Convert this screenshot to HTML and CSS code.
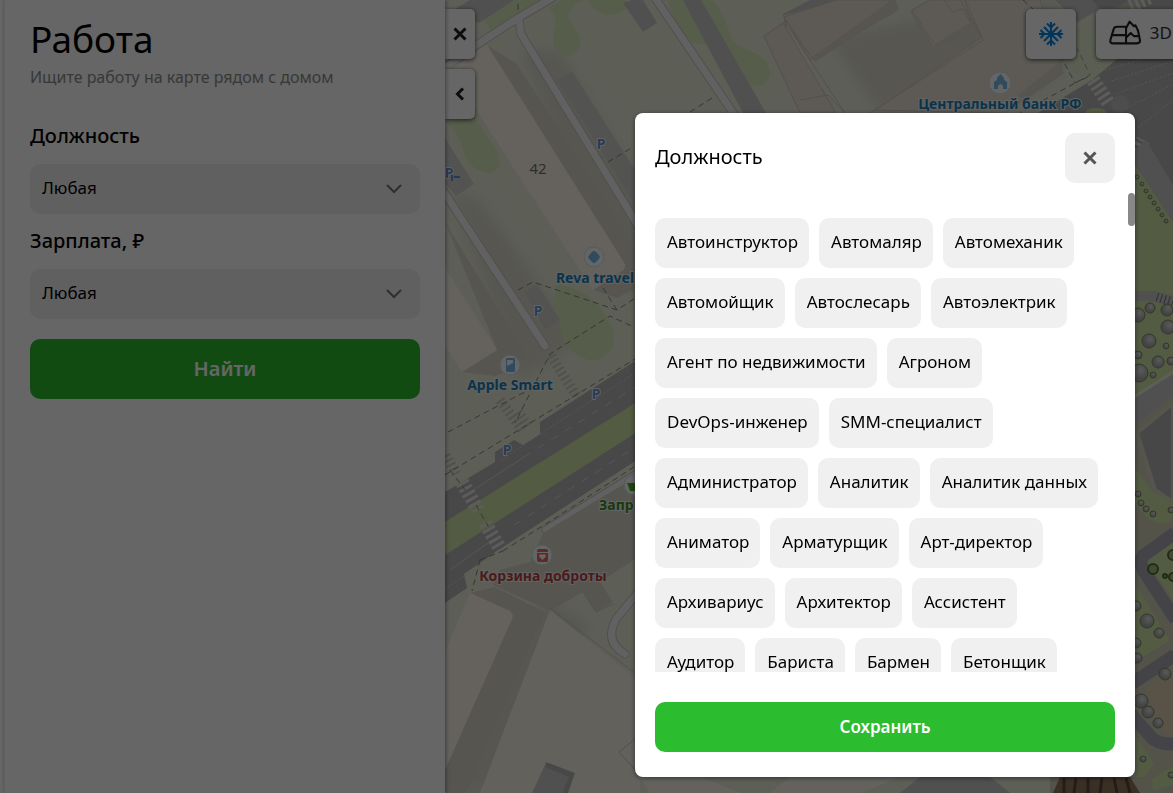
FILE: index.html
```html
<!DOCTYPE html>
<html lang="ru">
<head>
<meta charset="utf-8">
<meta name="viewport" content="width=device-width, initial-scale=1">
<title>Работа</title>
<link rel="stylesheet" href="styles.css">
</head>
<body>
<div class="app">
  <aside class="sidebar">
    <h1 class="title">Работа</h1>
    <p class="subtitle">Ищите работу на карте рядом с домом</p>
    <form class="filters">
      <label class="field-label" for="position">Должность</label>
      <div class="select-box">
        <select id="position" class="select"><option>Любая</option></select>
        <svg class="chevron" viewBox="0 0 16 10" aria-hidden="true"><path d="M1 1l7 7 7-7"/></svg>
      </div>
      <label class="field-label" for="salary">Зарплата, ₽</label>
      <div class="select-box">
        <select id="salary" class="select"><option>Любая</option></select>
        <svg class="chevron" viewBox="0 0 16 10" aria-hidden="true"><path d="M1 1l7 7 7-7"/></svg>
      </div>
      <button class="button find" type="button">Найти</button>
    </form>
  </aside>

  <main class="map">
    <svg class="map-canvas" viewBox="445 0 728 793" preserveAspectRatio="xMinYMin slice" aria-label="Карта">
      <defs>
        <filter id="soft" x="-20%" y="-20%" width="140%" height="140%"><feGaussianBlur stdDeviation="7"/></filter>
        <radialGradient id="tree" cx=".6" cy=".35"><stop offset="0" stop-color="#e0e0e0"/><stop offset="1" stop-color="#aaa"/></radialGradient>
      </defs>
      <rect class="ground" x="445" width="728" height="793"/>

      <g class="shade" filter="url(#soft)">
        <path d="M520 50L560 50L660 220L640 300L600 250Z"/>
        <path d="M450 190L480 200L580 340L520 380Z"/>
        <path d="M545 600L590 625L500 793H450Z"/>
        <path d="M830 40L1000 0H1060L1065 70L1010 100L880 113Z"/>
      </g>

      <g class="park">
        <path d="M482 19L512 0H543L520 14L491 30Q487 24 482 19Z"/>
        <path d="M548 8Q556 2 564 0H583Q562 10 572 24Q583 38 579 47Q574 58 566 56Q550 52 554 32Q560 18 548 8Z"/>
        <path d="M588 0Q594 12 607 15Q620 15 627 8L626 0Z"/>
        <path d="M668 0H684L712 45Q690 45 677 33Z"/>
        <path d="M698 0H712Q722 8 732 40Q740 48 758 54Q771 62 770 76Q764 88 750 85Z"/>
        <path d="M446 122L475 117Q482 130 497 150Q504 172 489 173Q468 170 463 150Q459 132 446 122Z"/>
        <path d="M556 285Q585 287 602 310Q616 330 613 345Q605 362 588 360Q560 350 559 320Q552 304 556 285Z"/>
        <ellipse cx="521" cy="793" rx="14" ry="9"/>
      </g>

      <path class="asphalt-light" d="M455 9L479 23L514 0H470ZM623 3L632 0H643L657 23L643 32ZM683 0H701L766 113H743ZM783 14L810 0H840L785 24Z"/>
      <path class="building-edge" d="M783 15L841 0H895L898 10L810 60ZM764 36L785 22L805 113H808Z"/>
      <path class="building-edge" d="M911 11L930 0H965L982 37L875 110L1005 113L1062 70L1040 0H965L971 24L934 49Z"/>
      <path class="building-edge" d="M784 17L836 0H893L812 58ZM764 36L783 23L836 113H800Z"/>
      <path class="side" d="M812 58L893 0L898 8L815 62ZM1018 95L1060 62L1064 73L1050 83L1025 100Z"/>
      <path class="building-edge" d="M912 10L930 0H944L952 12L963 9L971 23L935 45Z"/>
      <path class="side" d="M935 45L971 22L971 29L935 50Z"/>
      <path class="outline" d="M785 22L845 113M983 40L870 113M960 0L983 40M800 100L828 95L845 113"/>

      <path class="walk-edge" d="M442 70L478 44L518 18L552 -2M519 19L521 34L640 229M655 -2L740 123M442 189L545 346"/>
      <path class="walk" d="M442 70L478 44L518 18L552 -2M519 19L521 34L640 229M655 -2L740 123M442 189L545 346"/>
      <path class="parking" d="M557 80L572 71L635 170V205ZM445 138L474 184L456 196L445 184ZM524 292L537 284L560 320L545 330Z"/>

      <path class="side" d="M487 45L517 64L640 255V286L617 298L593 290L626 268Z"/>
      <path class="building" d="M445 72L487 45L625 264Q626 269 621 272L593 290L475 108L445 80Z"/>
      <path class="side" d="M445 222L527 355L514 368L495 376L462 372L497 350Z"/>
      <path class="building" d="M445 268L497 350L462 372L445 345Z"/>

      <path class="asphalt" d="M445 492L495 462V452L514 440L523 445L540 434V422L640 358V404L445 524Z"/>
      <path class="lawn" d="M445 522L640 400V430L445 555Z"/>
      <path class="asphalt" d="M445 555L640 430V458L500 549L464 574L467 588L445 603Z"/>
      <path class="lane" d="M475 489L524 457M450 570L488 543"/>
      <path class="lane dotted" d="M445 589L464 576M500 461L540 434L640 370"/>
      <path class="lane dashed" d="M524 457L640 384M514 525L640 444"/>
      <path class="walk-edge" d="M546 530L640 472"/>
      <path class="walk" d="M546 530L640 472"/>
      <path class="zebra" d="M462 482L478 510M485 523L501 550"/>
      <path class="zebra faint" d="M551 356L577 397M500 400L523 431M518 412L530 428M446 455L456 474"/>
      <path class="footway" d="M518 290L533 282L617 310L640 295M603 288L617 310M640 330L610 316L550 354L515 423M448 432L515 397L545 382M445 475L640 356M450 470L465 490M476 505L488 526M503 551L560 515L640 463M480 560L503 551M480 560L472 591M608 162L633 147M690 112L712 98M518 4V10M1023 0L1078 50L1090 75L1020 113M1060 55L1075 83L1090 76"/>

      <path class="side" d="M640 475L597 500L543 533L530 562L500 570L493 585L550 611L583 592L596 612L613 602L600 582L640 556Z"/>
      <path class="pale" d="M550 610L640 682V793H480Z"/>
      <path class="side" d="M470 593L495 587L545 612L466 793H445V770L513 615Z"/>
      <path class="building" d="M470 593L510 611Q514 615 512 619L445 770V652Z"/>
      <path class="outline" d="M550 608L640 677M640 735L619 752L640 775M583 592L596 612L613 604"/>
      <path class="walk-edge" d="M640 590L616 619Q604 642 625 654"/>
      <path class="walk" d="M640 590L616 619Q604 642 625 654"/>
      <path class="asphalt-light" d="M545 765L571 774L562 793H532Z"/>
      <path class="asphalt" d="M546 762L575 773L568 793H562L569 777L545 767Z"/>
      <path class="building" d="M640 777H700L740 793H650ZM790 777H900L860 793H770Z"/>
      <path class="asphalt-light" d="M920 777H990L1010 793H900Z"/>

      <path class="asphalt" d="M1010 130L1092 80L1118 58L1128 35L1090 0H1173V250L1135 170V140Z"/>
      <path class="park" d="M1076 28L1130 0H1145L1115 60L1092 80L1068 70Z" opacity=".35"/>
      <path class="asphalt-light" d="M1055 0L1078 22L1100 9L1092 0Z"/>
      <path class="lane dotted" d="M1105 70L1173 50M1112 81L1173 61M1115 94L1173 73M1120 112L1173 84M1135 130L1173 100"/>
      <path class="zebra" d="M1093 80L1109 104M1130 6L1152 -4M1137 152L1143 140"/>
      <circle class="pole" cx="1120" cy="104" r="9"/>
      <ellipse class="lawn" cx="1096" cy="113" rx="11" ry="5"/>
      <path class="asphalt-light" d="M1135 150L1146 140L1173 185V230L1136 175Z"/>

      <path class="lawn" d="M1135 165L1173 222V370L1135 395Z"/>
      <path class="asphalt-light" d="M1135 291H1155L1173 296V306L1150 301H1135ZM1135 398L1173 374V430L1135 450Z"/>
      <path class="ticks" d="M1157 297L1173 302"/>
      <path class="pavement" d="M1135 425L1173 395V793H1050V777H1135Z"/>
      <path class="roof-gray" d="M1137 433L1173 403V502L1155 490Z"/>
      <path class="lawn" d="M1135 468L1153 492L1173 502V520Q1158 529 1145 515L1135 505ZM1135 581L1171 640L1135 662ZM1135 690L1173 665V649L1135 675ZM1135 735L1154 764L1144 777H1135ZM1145 557Q1163 540 1173 540V600L1152 568ZM1152 779L1173 766V785L1153 790Z"/>
      <path class="sand" d="M1145 687L1173 668V742L1160 730Z"/>
      <path class="road-bend" d="M1175 533L1143 556Q1138 563 1145 573L1176 620M1130 685L1175 655M1130 713L1151 737Q1158 745 1175 744"/>
      <path class="outline" d="M1135 583L1171 641L1138 661"/>
      <g class="trees">
        <circle cx="1138" cy="315" r="7"/><circle cx="1150" cy="308" r="5"/><circle cx="1167" cy="310" r="6"/><circle cx="1168" cy="327" r="7"/><circle cx="1149" cy="341" r="7"/><circle cx="1166" cy="346" r="3"/><circle cx="1138" cy="355" r="4"/><circle cx="1158" cy="362" r="6"/><circle cx="1171" cy="361" r="4"/><circle cx="1139" cy="373" r="9"/><circle cx="1153" cy="375" r="3"/>
        <circle cx="1137" cy="177" r="2"/><circle cx="1142" cy="184" r="2"/><circle cx="1146" cy="191" r="2"/><circle cx="1150" cy="197" r="2"/><circle cx="1154" cy="203" r="2"/><circle cx="1158" cy="209" r="2"/><circle cx="1162" cy="215" r="2"/><circle cx="1166" cy="221" r="2"/>
        <circle cx="1138" cy="494" r="3"/><circle cx="1141" cy="503" r="3"/><circle cx="1146" cy="509" r="3"/><circle cx="1153" cy="514" r="3"/><circle cx="1171" cy="510" r="3"/>
        <circle cx="1136" cy="606" r="5"/><circle cx="1147" cy="621" r="7"/><circle cx="1159" cy="633" r="5"/><circle cx="1136" cy="643" r="5"/><circle cx="1137" cy="658" r="5"/><circle cx="1165" cy="674" r="6"/><circle cx="1141" cy="701" r="7"/><circle cx="1148" cy="712" r="6"/><circle cx="1158" cy="723" r="5"/><circle cx="1143" cy="759" r="3"/><circle cx="1171" cy="775" r="3"/>
      </g>
      <g class="shrubs"><circle cx="1153" cy="569" r="5"/><circle cx="1165" cy="576" r="2"/><circle cx="1173" cy="555" r="5"/><circle cx="1173" cy="577" r="4"/></g>
      <path class="brick" d="M1053 793L1060 777H1130L1140 793Z"/>
      <path class="brick-lines" d="M1064 778V793M1076 778L1074 793M1088 778V793M1102 778L1100 793M1114 778L1117 793M1126 778L1130 793"/>

      <g class="poi-dot"><circle cx="1000" cy="83" r="11"/><circle cx="594" cy="257" r="10"/><circle cx="510" cy="365" r="10"/><circle cx="542" cy="555" r="10"/><circle cx="634" cy="485" r="10"/></g>
      <path class="poi-blue" d="M994 89V82L997 80V78L1000.500 74L1004 78V80L1007 82V89H1003V86Q1000.500 82 998 86V89ZM594 251Q596 251 600 257Q596 263 594 263Q592 263 588 257Q592 251 594 251Z"/>
      <rect class="poi-blue" x="506" y="358" width="9" height="14" rx="1"/><path class="poi-light" d="M507 360H513V363L507 366Z"/>
      <rect class="poi-red" x="537" y="549" width="11" height="13" rx="2"/><path class="poi-light" d="M537 552H548V553H537ZM542.500 560L539 556.500Q539 554 541 554L542.500 555L544 554Q546 554 546 556.500Z"/>
      <path class="poi-green" d="M627 483H640V485L638 491H630L628 485Z"/>

      <g class="parking-mark"><text x="601" y="149">P</text><text x="538" y="316">P</text><text x="596" y="399">P</text><text x="507" y="455">P</text><text x="449" y="178">P</text></g>
      <path class="parking-bar" d="M452 175V181M454 177H460"/>
      <text class="house" x="538" y="174">42</text>
      <text class="place" x="1000" y="109">Центральный банк РФ</text>
      <text class="place" x="595" y="283">Reva travel</text>
      <text class="place" x="510" y="390">Apple Smart</text>
      <text class="place charity" x="543" y="581">Корзина доброты</text>
      <text class="place shop" x="599" y="510">Запр</text>
    </svg>

    <div class="side-tabs">
      <button class="tab" type="button" aria-label="Закрыть панель"><svg viewBox="0 0 14 14"><path d="M1.500 1.500l11 11M12.500 1.500l-11 11"/></svg></button>
      <button class="tab" type="button" aria-label="Свернуть панель"><svg viewBox="0 0 14 14"><path d="M10 1.500L4.500 7l5.500 5.500"/></svg></button>
    </div>
    <div class="map-tools">
      <button class="tool snow" type="button" aria-label="Зимняя карта">
        <svg viewBox="0 0 26 26"><path d="M13 1v24M1 13h24M6 6l14 14M20 6L6 20M9 2.500l4 4 4-4M9 23.500l4-4 4 4M2.500 9l4 4-4 4M23.500 9l-4 4 4 4"/></svg>
      </button>
      <button class="tool relief" type="button">
        <svg viewBox="0 0 32 26"><path d="M17 7.500H8.500Q5.500 7.500 5 10L2 20Q1 23.500 5 23.500H27Q30.500 23.500 30.500 21L28.500 11L26 6L24.500 7L20.500 2.500L17 9V23.500M3.500 15.500H17M17 18L21.500 13.500L24.500 16.500H29.500"/></svg>
        <span>3D</span>
      </button>
    </div>
  </main>
</div>

<div class="backdrop">
  <section class="dialog" role="dialog" aria-modal="true" aria-labelledby="dialog-title">
    <header class="dialog-head">
      <h2 class="dialog-title" id="dialog-title">Должность</h2>
      <button class="close" type="button" aria-label="Закрыть"><svg viewBox="0 0 14 14"><path d="M1.500 1.500l11 11M12.500 1.500l-11 11"/></svg></button>
    </header>
    <div class="dialog-body">
      <div class="chips">
        <button class="chip" type="button">Автоинструктор</button>
        <button class="chip" type="button">Автомаляр</button>
        <button class="chip" type="button">Автомеханик</button>
        <button class="chip" type="button">Автомойщик</button>
        <button class="chip" type="button">Автослесарь</button>
        <button class="chip" type="button">Автоэлектрик</button>
        <button class="chip" type="button">Агент по недвижимости</button>
        <button class="chip" type="button">Агроном</button>
        <button class="chip" type="button">DevOps-инженер</button>
        <button class="chip" type="button">SMM-специалист</button>
        <button class="chip" type="button">Администратор</button>
        <button class="chip" type="button">Аналитик</button>
        <button class="chip" type="button">Аналитик данных</button>
        <button class="chip" type="button">Аниматор</button>
        <button class="chip" type="button">Арматурщик</button>
        <button class="chip" type="button">Арт-директор</button>
        <button class="chip" type="button">Архивариус</button>
        <button class="chip" type="button">Архитектор</button>
        <button class="chip" type="button">Ассистент</button>
        <button class="chip" type="button">Аудитор</button>
        <button class="chip" type="button">Бариста</button>
        <button class="chip" type="button">Бармен</button>
        <button class="chip" type="button">Бетонщик</button>
      </div>
      <span class="scroll-thumb"></span>
    </div>
    <button class="button save" type="button">Сохранить</button>
  </section>
</div>
</body>
</html>
```
FILE: styles.css
```css
* { box-sizing: border-box; }

body {
  margin: 0;
  overflow: hidden;
  font-family: "Noto Sans", "Open Sans", sans-serif;
  color: #000;
}

button, select { font-family: inherit; border: 0; margin: 0; }

.app { display: flex; height: 100vh; background: #fff; }

/* Search panel */
.sidebar {
  flex: 0 0 441px;
  margin-left: 4px;
  padding: 15px 25px 0;
  background: #fff;
  border-left: 1px solid #f0f0f0;
  box-shadow: 1px 0 4px rgba(0, 0, 0, .4);
  z-index: 1;
}
.title { margin: 0; font-size: 37px; line-height: 48px; font-weight: 400; }
.subtitle { margin: 2px 0 0; font-size: 16px; line-height: 24px; color: #8c8c8c; }
.filters { display: flex; flex-direction: column; margin-top: 32px; }
.field-label { font-size: 20px; line-height: 30px; font-weight: 500; }
.select-box { position: relative; margin: 13px 0 12px; }
.select {
  display: block;
  width: 100%;
  height: 50px;
  padding: 0 40px 3px 12px;
  border-radius: 10px;
  background: #f0f0f0;
  color: #000;
  font-size: 17px;
  appearance: none;
}
.chevron {
  position: absolute;
  right: 18px;
  top: 20px;
  width: 16px;
  height: 10px;
  fill: none;
  stroke: #777;
  stroke-width: 2;
  pointer-events: none;
}
.button {
  background: #2bbc2f;
  border-radius: 10px;
  color: #fff;
  font-weight: 600;
}
.find { height: 60px; margin-top: 8px; padding-bottom: 3px; font-size: 20px; }

/* Map */
.map { position: relative; flex: 1; overflow: hidden; }
.map-canvas { position: absolute; inset: 0; width: 100%; height: 100%; }
.ground { fill: #e9edda; }
.shade { fill: #d6d3c6; opacity: .8; }
.park { fill: #d6e8b9; }
.lawn { fill: #cfe3a8; }
.asphalt { fill: #b4b4b6; }
.asphalt-light { fill: #c8c8c8; }
.parking { fill: #d0d0cc; }
.building { fill: #fcf6e9; }
.building-edge { fill: #e8e2d5; stroke: #d0c9bc; }
.pale { fill: #f6f2e6; }
.side { fill: #dad4c8; }
.outline { fill: none; stroke: #cfc8bc; stroke-width: 1; }
.walk, .walk-edge { fill: none; stroke: #f3f3f6; stroke-width: 7; stroke-linejoin: round; stroke-linecap: round; }
.walk-edge { stroke: #c6c5c3; stroke-width: 9; }
.lane { fill: none; stroke: #d8d8d8; stroke-width: 1; }
.dashed { stroke-dasharray: 8 8; }
.dotted { stroke-dasharray: 2 2; }
.zebra { fill: none; stroke: #e6e6e2; stroke-width: 14; stroke-dasharray: 3 3; }
.faint { stroke: #cac8be; stroke-width: 10; stroke-dasharray: 2 3; }
.ticks { stroke: #777; stroke-width: 9; stroke-dasharray: 1 3; }
.footway { fill: none; stroke: #89877f; stroke-width: 1; stroke-dasharray: 6 4; }
.pole { fill: #c0c0c0; }
.pavement { fill: #cfcfba; }
.roof-gray { fill: #b2b2b2; stroke: #d5d5c0; stroke-width: 4; }
.sand { fill: #ddd0b0; }
.road-bend { fill: none; stroke: #aaaab4; stroke-width: 13; }
.trees { fill: url(#tree); stroke: #7b8e60; stroke-width: 1; }
.shrubs { fill: #a0b880; stroke: #4d7030; stroke-width: 2; }
.brick { fill: #92775e; }
.brick-lines { stroke: #5a483c; stroke-width: 3; }
.poi-dot { fill: #fafcff; stroke: #d8dde0; }
.poi-blue { fill: #77bce9; }
.poi-red { fill: #e56b5e; }
.poi-green { fill: #4eac23; }
.poi-light { fill: #fff; }
.place, .parking-mark text {
  font-size: 14px;
  font-weight: 700;
  text-anchor: middle;
  fill: #227fb5;
  stroke: #f2f8fa;
  stroke-width: 2px;
  paint-order: stroke;
}
.parking-mark text { font-weight: 600; fill: #6090d8; }
.parking-bar { fill: none; stroke: #6090d8; stroke-width: 2; }
.place.charity { fill: #b8453e; }
.place.shop { fill: #438d1e; text-anchor: start; }
.house { font-size: 15px; fill: #77746b; text-anchor: middle; }

.side-tabs {
  position: absolute;
  left: 0;
  top: 9px;
  display: grid;
  gap: 10px;
}
.tab {
  display: grid;
  place-items: center;
  width: 30px;
  height: 50px;
  padding: 0;
  border-radius: 0 5px 5px 0;
  background: #fff;
  box-shadow: 0 1px 4px rgba(0, 0, 0, .7);
}
.tab svg { width: 14px; height: 14px; fill: none; stroke: #222; stroke-width: 3; }
.map-tools {
  position: absolute;
  top: 9px;
  right: -11px;
  display: flex;
  gap: 20px;
}
.tool {
  display: flex;
  align-items: center;
  justify-content: center;
  gap: 8px;
  height: 50px;
  padding: 0 12px;
  border-radius: 5px;
  background: #fff;
  box-shadow: 0 1px 4px rgba(0, 0, 0, .7);
  color: #333;
  font-size: 17px;
}
.tool svg { fill: none; stroke: #222; stroke-width: 2; stroke-linejoin: round; }
.snow svg { width: 26px; height: 26px; stroke: #0084e8; }
.relief { padding-bottom: 3px; }
.relief svg { width: 34px; height: 27px; }

/* Position picker */
.backdrop {
  position: fixed;
  inset: 0;
  z-index: 10;
  display: flex;
  justify-content: flex-end;
  padding: 113px 38px 16px;
  background: rgba(0, 0, 0, .6);
}
.dialog {
  display: flex;
  flex-direction: column;
  width: 500px;
  padding: 20px 20px 25px;
  border-radius: 8px;
  background: #fff;
  box-shadow: 0 1px 5px rgba(0, 0, 0, .5);
}
.dialog-head { display: flex; justify-content: space-between; }
.dialog-title { margin: 9px 0 0; font-size: 20px; line-height: 30px; font-weight: 400; }
.close {
  display: grid;
  place-items: center;
  width: 50px;
  height: 50px;
  border-radius: 10px;
  background: #f0f0f0;
}
.close svg { width: 14px; height: 14px; fill: none; stroke: #555; stroke-width: 3; }
.dialog-body {
  position: relative;
  flex: 1;
  min-height: 0;
  margin: 10px -20px 30px 0;
}
.chips {
  display: flex;
  flex-wrap: wrap;
  align-content: flex-start;
  gap: 10px;
  height: 100%;
  padding: 25px 20px 0 0;
  overflow: hidden;
}
.chip {
  height: 50px;
  padding: 0 11px 3px 12px;
  border-radius: 10px;
  background: #f0f0f0;
  color: #000;
  font-size: 17px;
  font-weight: 400;
}
.scroll-thumb {
  position: absolute;
  top: 0;
  right: 0;
  width: 7px;
  height: 33px;
  border-radius: 4px;
  background: #888;
}
.save { height: 50px; padding-bottom: 3px; font-size: 17px; }
```
